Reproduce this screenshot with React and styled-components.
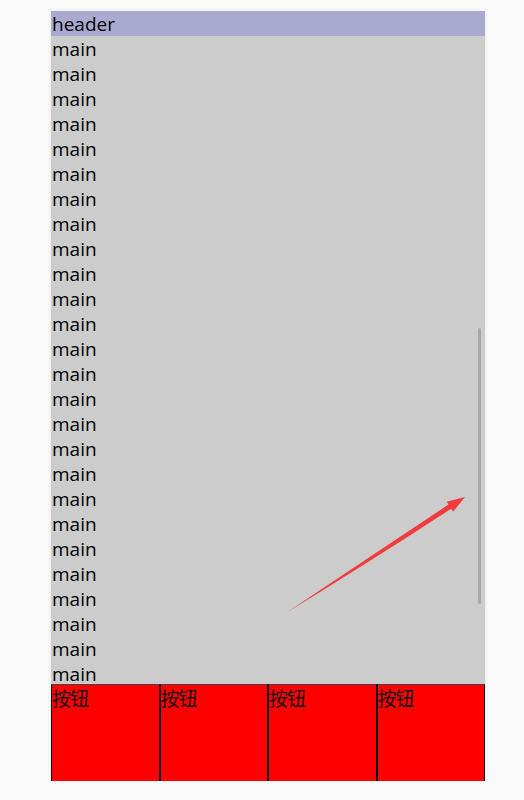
import React from "react";
import styled, { createGlobalStyle } from "styled-components";

const GlobalStyle = createGlobalStyle`
  html, body {
    margin: 0;
    padding: 0;
    background: #f9f9f9;
  }
  body {
    font-family: "Open Sans", "Noto Sans CJK SC", sans-serif;
  }
  * {
    box-sizing: border-box;
  }
`;

const Page = styled.div`
  padding: 11px 0 0 51px;
`;

const Phone = styled.div`
  position: relative;
  width: 434px;
  height: 770px;
  display: flex;
  flex-direction: column;
  overflow: hidden;
  box-shadow: 0 0 4px rgba(0, 0, 0, 0.08);
  font-size: 19px;
  color: #000;
`;

const Header = styled.div`
  flex: 0 0 25px;
  height: 25px;
  padding: 1px 0 0 1px;
  line-height: 25px;
  background: #aaaad0;
`;

const Main = styled.div`
  flex: 1;
  min-height: 0;
  overflow: hidden;
  background: #cccccc;
`;

const Row = styled.div`
  height: 25px;
  padding: 1px 0 0 1px;
  line-height: 25px;
`;

const Footer = styled.div`
  flex: 0 0 97px;
  display: flex;
  background: red;
`;

const Button = styled.div`
  flex: 1;
  border: 1px solid #000;
  border-top-color: #444;
  border-bottom: none;
  font-family: "Noto Sans CJK SC", sans-serif;
  font-size: 19px;
  line-height: 26px;
  letter-spacing: -1px;
  color: #111;
`;

const Thumb = styled.div`
  position: absolute;
  right: 4px;
  top: 317px;
  width: 3px;
  height: 276px;
  border-radius: 2px;
  background: #a8a8a8;
`;

const Arrow = styled.svg`
  position: absolute;
  left: 0;
  top: 0;
  pointer-events: none;
`;

export default function App() {
  const rows = Array.from({ length: 60 }, (_, i) => i);
  return (
    <Page>
      <GlobalStyle />
      <Phone>
        <Header>header</Header>
        <Main>
          {rows.map((i) => (
            <Row key={i}>main</Row>
          ))}
        </Main>
        <Footer>
          {[0, 1, 2, 3].map((i) => (
            <Button key={i}>按钮</Button>
          ))}
        </Footer>
        <Thumb />
        <Arrow width="434" height="770" viewBox="0 0 434 770">
          <path
            d="M235 602 Q320 545 397.5 493.6 L395.7 490.7 L414 486 L402.1 500.7 L400.2 497.8 Q320 550 235 602 Z"
            fill="#f33b3b"
          />
        </Arrow>
      </Phone>
    </Page>
  );
}
